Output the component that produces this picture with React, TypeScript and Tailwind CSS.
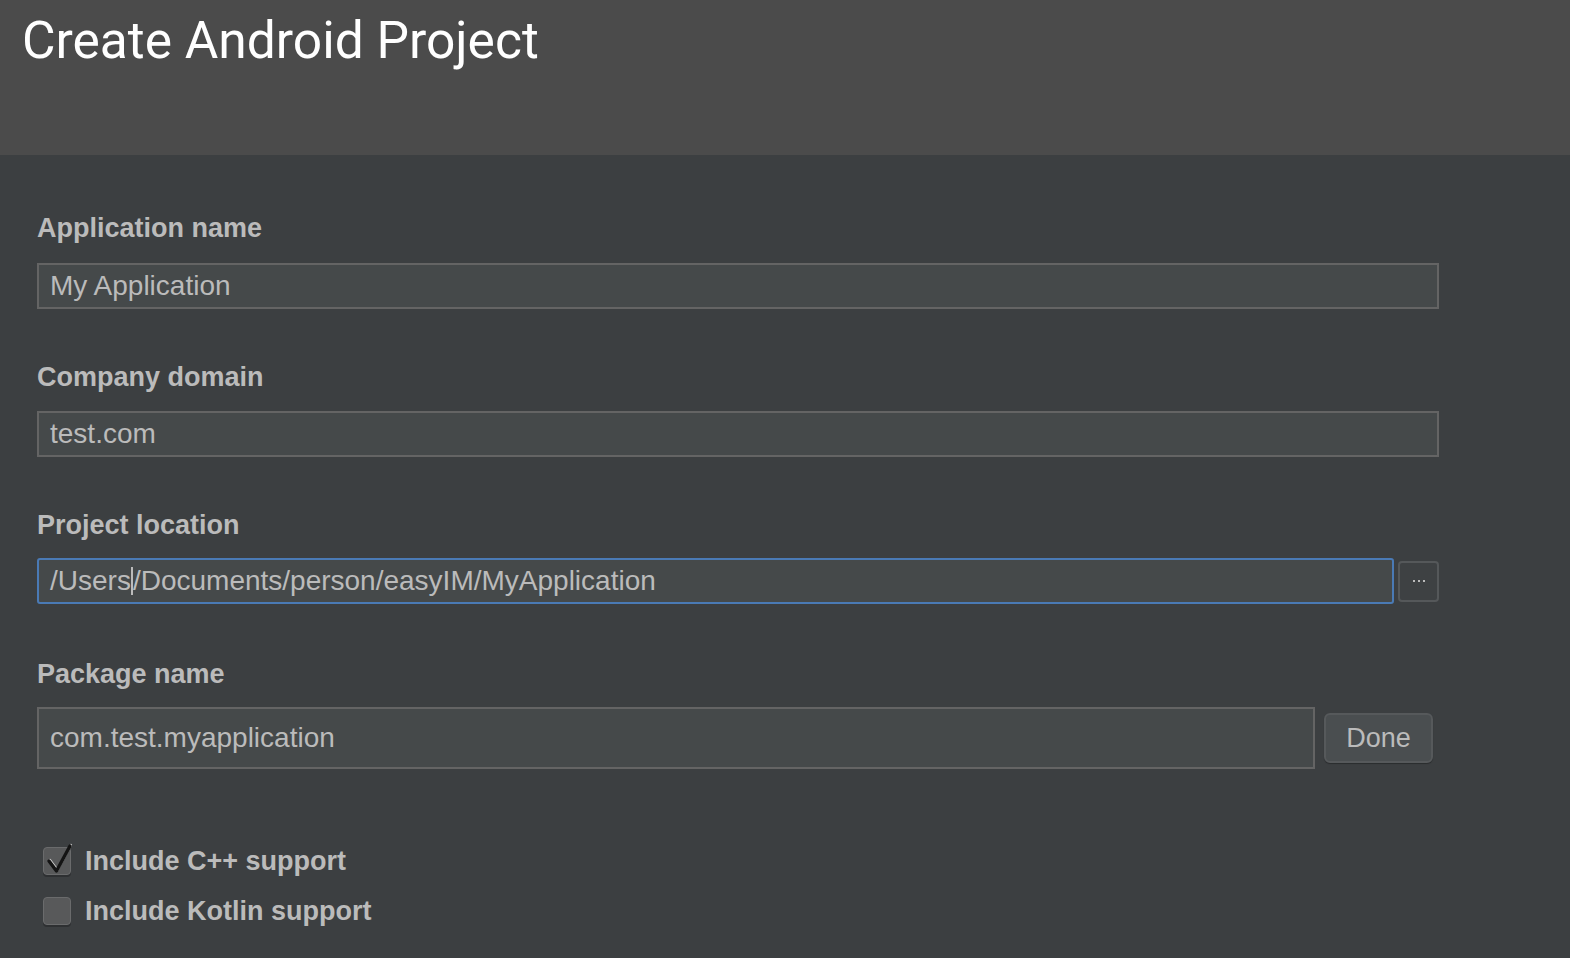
import { useState } from 'react';

const labelCls = "text-[27px] leading-[30px] font-bold text-[#bbbbbb]";
const inputCls =
  "border-2 border-[#646464] bg-[#45494a] px-[11px] text-[28px] text-[#bbbbbb] flex items-center";

function Check({ checked, label, onToggle }: { checked: boolean; label: string; onToggle: () => void }) {
  return (
    <label className="flex items-center gap-[14px] cursor-pointer" onClick={onToggle}>
      <span className="relative w-[28px] h-[28px] rounded-[4px] bg-[#58595a] border border-[#6a6b6c] shadow-[0_2px_0_#2e3032]">
        {checked && (
          <svg className="absolute left-0 top-0 overflow-visible" width="28" height="28" viewBox="0 0 28 28">
            <path d="M5 13 L12.5 23 L26 -2" fill="none" stroke="#cfcfcf" strokeWidth="2.2" strokeLinecap="round" strokeLinejoin="round" transform="translate(1 -1)" />
            <path d="M5 13 L12.5 23 L26 -2" fill="none" stroke="#141414" strokeWidth="3.4" strokeLinecap="round" strokeLinejoin="round" />
          </svg>
        )}
      </span>
      <span className={labelCls}>{label}</span>
    </label>
  );
}

export default function App() {
  const [cpp, setCpp] = useState(true);
  const [kotlin, setKotlin] = useState(false);

  return (
    <div className="w-[1570px] h-[958px] bg-[#3c3f41] overflow-hidden" style={{ fontFamily: '"Liberation Sans", Arial, sans-serif' }}>
      {/* Header */}
      <div className="h-[155px] bg-[#4b4b4b] pl-[22px] pt-[11px]">
        <h1 className="text-[51.5px] leading-[60px] text-white" style={{ fontFamily: 'Roboto, sans-serif' }}>
          Create Android Project
        </h1>
      </div>

      {/* Form */}
      <div className="pl-[37px] pt-[58px] flex flex-col">
        <div className={labelCls}>Application name</div>
        <div className={`${inputCls} mt-[20px] w-[1402px] h-[46px]`}>My Application</div>

        <div className={`${labelCls} mt-[53px]`}>Company domain</div>
        <div className={`${inputCls} mt-[19px] w-[1402px] h-[46px]`}>test.com</div>

        <div className={`${labelCls} mt-[53px]`}>Project location</div>
        <div className="mt-[18px] flex items-center gap-[4px]">
          <div className="w-[1357px] h-[46px] border-2 border-[#4a7ab5] rounded-[3px] bg-[#45494a] px-[11px] text-[28px] text-[#bbbbbb] flex items-center">
            <span>/Users</span>
            <span className="w-[2px] h-[28px] bg-[#bbbbbb]" />
            <span>/Documents/person/easyIM/MyApplication</span>
          </div>
          <button className="w-[41px] h-[41px] border-2 border-[#55585a] rounded-[4px] bg-[#3e4143] flex items-center justify-center gap-[3px]">
            <span className="w-[2px] h-[2px] bg-[#bbbbbb]" />
            <span className="w-[2px] h-[2px] bg-[#bbbbbb]" />
            <span className="w-[2px] h-[2px] bg-[#bbbbbb]" />
          </button>
        </div>

        <div className={`${labelCls} mt-[55px]`}>Package name</div>
        <div className="mt-[18px] flex items-center gap-[9px]">
          <div className={`${inputCls} w-[1278px] h-[62px]`}>com.test.myapplication</div>
          <button className="w-[109px] h-[50px] border-2 border-[#56595b] rounded-[6px] bg-[#4a4e50] text-[27px] text-[#bbbbbb] shadow-[0_1px_1px_rgba(0,0,0,0.3)]">
            Done
          </button>
        </div>

        {/* Checkboxes */}
        <div className="mt-[77px] flex flex-col gap-[20px] pl-[6px]">
          <Check checked={cpp} label="Include C++ support" onToggle={() => setCpp(!cpp)} />
          <Check checked={kotlin} label="Include Kotlin support" onToggle={() => setKotlin(!kotlin)} />
        </div>
      </div>
    </div>
  );
}
